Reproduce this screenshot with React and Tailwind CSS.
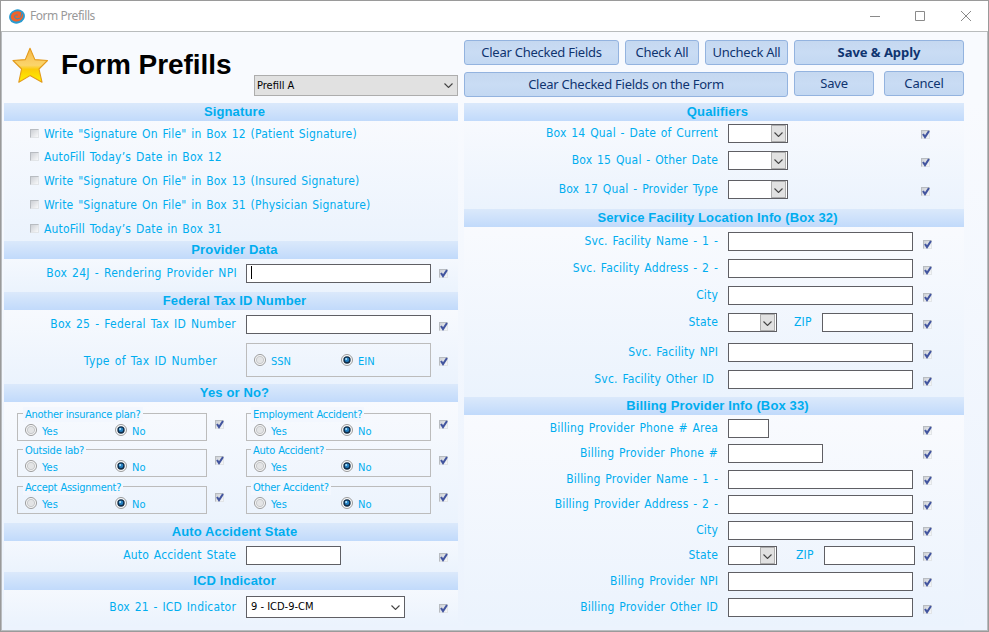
import { useState } from 'react'
import clsx from 'clsx'

const tahoma = "font-['DejaVu_Sans_Condensed','DejaVu_Sans',sans-serif] [font-stretch:condensed]"
const segoe = "font-['Noto_Sans','Open_Sans',sans-serif] [word-spacing:0]"

function Check({ className, on = true }) {
  const [checked, setChecked] = useState(on)
  return (
    <button
      onClick={() => setChecked(!checked)}
      className={clsx(
        'block size-[9px] shrink-0 border border-[#b8bcc1] border-r-[#e2e5e8] border-b-[#e2e5e8] bg-linear-to-br from-[#cdd0d5] to-[#f8f9fa]',
        className
      )}
    >
      {checked && (
        <svg viewBox="0 0 9 9" className="-mt-px -ml-px block size-[9px] overflow-visible" fill="none">
          <path d="M2 4 4 7 8 1" stroke="#42559f" strokeWidth="2.1" />
        </svg>
      )}
    </button>
  )
}

function Radio({ on, label, className }) {
  return (
    <span className={clsx('flex h-3 items-center tracking-normal', className)}>
      <svg viewBox="0 0 12 12" className="size-3 shrink-0">
        <circle cx="6" cy="6" r="5.5" fill="#fbfbfb" stroke="#8e8f8f" strokeWidth="0.9" />
        {on ? (
          <>
            <circle cx="6" cy="6" r="3.7" fill="#0f2c48" />
            <circle cx="6" cy="5.8" r="2.3" fill="#2480c2" />
            <circle cx="5.2" cy="4.9" r="1" fill="#b5e4fa" />
          </>
        ) : (
          <circle cx="6" cy="6" r="3.7" fill="#e3e4e5" stroke="#bcbfc1" strokeWidth="0.8" />
        )}
      </svg>
      <span className="mt-[3px] ml-[5px] text-[11px] leading-3">{label}</span>
    </span>
  )
}

function Chevron({ className }) {
  return (
    <svg viewBox="0 0 9 5" className={clsx('h-[5px] w-[9px]', className)} fill="none">
      <path d="M0.5 0.5 4.5 4.5 8.5 0.5" stroke="#444" strokeWidth="1.1" />
    </svg>
  )
}

function Field({ className }) {
  return <input className={clsx('block h-[19px] shrink-0 border border-[#5f5f64] bg-white px-1 text-[11px] text-black outline-none', className)} />
}

function SmallSelect({ className }) {
  return (
    <div className={clsx('flex h-[19px] shrink-0 justify-end border border-[#5f5f64] bg-white pr-px', className)}>
      <div className="flex w-[15px] items-center justify-center border border-[#adadad] bg-[#e1e1e1] pt-px">
        <Chevron />
      </div>
    </div>
  )
}

function Section({ title, className, children }) {
  return (
    <section className={clsx('flex flex-col bg-linear-to-b from-[#fafbfe] to-[#ebf3fd]', className)}>
      <h2 className="h-[18px] shrink-0 bg-linear-to-b from-[#dbe9fb] to-[#c1dafb] pl-[7px] text-center font-['Liberation_Sans',Arial,sans-serif] text-[13px] leading-[17px] font-bold tracking-[0.14px] [word-spacing:0]">
        {title}
      </h2>
      {children}
    </section>
  )
}

function LeftRow({ label, className, labelClass = 'w-[232px]', checkClass, children }) {
  return (
    <div className={clsx('flex h-[19px] shrink-0', className)}>
      <label className={clsx('shrink-0 text-right leading-[19px] whitespace-nowrap', labelClass)}>{label}</label>
      <div className="ml-auto flex w-[212px] shrink-0">
        {children}
        <Check className={clsx('mr-[10px] ml-auto', checkClass)} />
      </div>
    </div>
  )
}

function RightRow({ label, className, labelClass = 'w-[254px]', bodyClass = 'w-[204px]', checkClass, children }) {
  return (
    <div className={clsx('flex h-[19px] shrink-0', className)}>
      <div className="w-[264px] shrink-0">
        <label className={clsx('block text-right leading-[19px]', labelClass)}>{label}</label>
      </div>
      <div className={clsx('flex shrink-0', bodyClass)}>
        {children}
        <Check className={clsx('ml-auto', checkClass)} />
      </div>
    </div>
  )
}

function YesNo({ title, wide }) {
  return (
    <fieldset className={clsx('relative h-7 shrink-0 border border-[#bcbcbc]', wide ? 'w-[190px]' : 'w-[185px]')}>
      <span
        className={clsx(
          'absolute -top-[7px] bg-[#f3f7fe] px-[2px] text-[11px] leading-[15px] tracking-[-0.25px] whitespace-nowrap [word-spacing:0.3px]',
          wide ? 'left-[5px]' : 'left-[4px]'
        )}
      >
        {title}
      </span>
      <div className="flex pt-[10px] pl-[7px]">
        <Radio label="Yes" className={wide ? 'w-[90px]' : 'w-[87px]'} />
        <Radio label="No" on />
      </div>
    </fieldset>
  )
}

function Btn({ className, children }) {
  return (
    <button
      className={clsx(
        'flex h-[25px] shrink-0 items-center justify-center rounded-[3px] border border-[#93b3df] bg-linear-to-b from-[#c5d8f0] via-[#c9dcf4] to-[#c3d8f2] text-[13px] whitespace-nowrap text-[#0f3470]',
        segoe,
        className
      )}
    >
      {children}
    </button>
  )
}

const signatures = [
  { text: 'Write "Signature On File" in Box 12 (Patient Signature)', cls: 'mt-[3px]' },
  { text: 'AutoFill Today’s Date in Box 12', cls: 'mt-[4px]' },
  { text: 'Write "Signature On File" in Box 13 (Insured Signature)', cls: 'mt-[5px]' },
  { text: 'Write "Signature On File" in Box 31 (Physician Signature)', cls: 'mt-[5px]' },
  { text: 'AutoFill Today’s Date in Box 31', cls: 'mt-[5px]' },
]

const questions = [
  { left: 'Another insurance plan?', right: 'Employment Accident?', cls: 'mt-[11px]' },
  { left: 'Outside lab?', right: 'Auto Accident?', cls: 'mt-[8px]' },
  { left: 'Accept Assignment?', right: 'Other Accident?', cls: 'mt-[9px]' },
]

export default function App() {
  return (
    <div
      className={clsx(
        'flex h-[632px] w-[989px] flex-col overflow-hidden border border-[#9a9a9a] bg-[#f8fafe] text-[12px] tracking-[0.17px] text-[#00adef] [word-spacing:1.2px]',
        tahoma
      )}
    >
      {/* title bar */}
      <header className="flex h-[31px] shrink-0 items-center border-b border-[#b9bcbd] bg-white pl-2">
        <svg viewBox="0 0 16 15" className="h-[15px] w-4">
          <ellipse cx="8" cy="7.500" rx="8" ry="7" transform="rotate(-20 8 7.5)" fill="#2a9bd0" />
          <path d="M2 9.600C1 5 5 1.800 9 2.200c4 .4 5.800 3.500 4.600 6.600-1 2.700-4.400 4-7.400 3.600-1.600-.2-3.600-1.200-4.200-2.800z" fill="#f2622a" />
          <path d="M12.500 4c.6 3-1 5.600-3.900 5.800-2.300.1-3.600-1.500-2.800-3 .6-1.100 2.200-1.200 3-.5" fill="none" stroke="#3a8fba" strokeWidth="1" />
        </svg>
        <span className={clsx('ml-[5px] text-[12px] tracking-[-0.45px] text-[#999]', segoe)}>Form Prefills</span>
        <div className="ml-auto flex items-center gap-[35px] pr-[17px] pb-px">
          <svg viewBox="0 0 10 10" className="size-[10px]"><path d="M0 5.500h10" stroke="#8a8a8a" /></svg>
          <svg viewBox="0 0 10 10" className="mr-px size-[10px]"><path d="M.5.5h9v9h-9z" fill="none" stroke="#8a8a8a" /></svg>
          <svg viewBox="0 0 10 10" className="size-[10px] overflow-visible"><path d="M0 0l10 10M10 0L0 10" stroke="#8a8a8a" /></svg>
        </div>
      </header>

      <div className="flex grow flex-col border-x border-b border-[#b9bcbf]">
        {/* toolbar */}
        <div className="flex h-[71px] shrink-0 pl-[2px]">
          <div className="flex w-[454px] shrink-0">
            <svg viewBox="0 0 38 38" className="mt-[14px] ml-[7px] size-[38px]">
              <defs>
                <linearGradient id="star" x1="0" y1="0" x2="0" y2="1">
                  <stop offset="0" stopColor="#f6b848" />
                  <stop offset="0.5" stopColor="#fbd56c" />
                  <stop offset="0.62" stopColor="#fccb08" />
                  <stop offset="1" stopColor="#fff200" />
                </linearGradient>
              </defs>
              <path
                d="M19 2.300 23.900 13.600 36.500 14.500 28 23 31 36.200 19 29.600 7.800 36.200 10.600 23 2 14.500 14.300 13.600Z"
                fill="url(#star)"
                stroke="#e39a1c"
                strokeWidth="1.100"
                strokeLinejoin="round"
              />
            </svg>
            <h1 className="mt-[16px] ml-[12px] w-[193px] shrink-0 font-['Liberation_Sans',Arial,sans-serif] text-[28px] leading-[34px] font-bold tracking-[-0.05px] text-black [word-spacing:0]">
              Form Prefills
            </h1>
            <div className="mt-[43px] flex h-[21px] w-[204px] items-center justify-between border border-[#adadad] bg-[#e1e1e1] pr-1 pl-[2px] text-[11px] tracking-normal text-black [word-spacing:0]">
              <span className="pt-[2px]">Prefill A</span>
              <Chevron />
            </div>
          </div>
          <div className="ml-[6px] flex w-[324px] shrink-0 flex-col gap-[7px] pt-2">
            <div className="flex gap-[6px] tracking-[-0.25px]">
              <Btn className="w-[155px]">Clear Checked Fields</Btn>
              <Btn className="w-[74px]">Check All</Btn>
              <Btn className="w-[83px]">Uncheck All</Btn>
            </div>
            <Btn className="w-[324px] tracking-[-0.25px]">Clear Checked Fields on the Form</Btn>
          </div>
          <div className="ml-[6px] flex w-[170px] shrink-0 flex-col gap-[6px] pt-2">
            <Btn className="w-[170px] font-bold tracking-[-0.05px]">Save &amp; Apply</Btn>
            <div className="flex justify-between tracking-[-0.2px]">
              <Btn className="w-[80px]">Save</Btn>
              <Btn className="w-[80px]">Cancel</Btn>
            </div>
          </div>
        </div>

        <main className="flex grow gap-[6px] bg-linear-to-b from-[#f8fafe] to-[#ecf3fd] pl-[2px]">
          <div className="flex w-[454px] shrink-0 flex-col">
            <Section title="Signature" className="h-[138px]">
              {signatures.map((s) => (
                <div key={s.text} className={clsx('flex h-[19px] shrink-0 items-center pl-[26px]', s.cls)}>
                  <Check on={false} />
                  <span className="ml-[5px] pt-px leading-[19px] tracking-[0.19px] whitespace-nowrap">{s.text}</span>
                </div>
              ))}
            </Section>

            <Section title="Provider Data" className="h-[51px]">
              <LeftRow label="Box 24J - Rendering Provider NPI" labelClass="w-[233px] tracking-[0.3px]" className="mt-[5px]" checkClass="mt-[5px]">
                <div className="flex h-[19px] w-[185px] border border-[#5f5f64] bg-white pt-px pl-[4px]">
                  <span className="h-[13px] w-px bg-black" />
                </div>
              </LeftRow>
            </Section>

            <Section title="Federal Tax ID Number" className="h-[92px]">
              <LeftRow label="Box 25 - Federal Tax ID Number" labelClass="w-[232px] tracking-[0.27px]" className="mt-[5px]" checkClass="mt-[7px]">
                <Field className="w-[185px]" />
              </LeftRow>
              <div className="mt-[9px] flex h-[34px] shrink-0">
                <span className="w-[213px] text-right leading-[36px] tracking-[0.34px]">Type of Tax ID Number</span>
                <div className="ml-auto flex w-[212px] shrink-0">
                  <div className="flex h-[34px] w-[185px] items-center border border-[#bcbcbc] pl-[7px]">
                    <Radio label="SSN" className="w-[87px]" />
                    <Radio label="EIN" on />
                  </div>
                  <Check className="mt-[14px] mr-[10px] ml-auto" />
                </div>
              </div>
            </Section>

            <Section title="Yes or No?" className="h-[139px]">
              {questions.map((q) => (
                <div key={q.left} className={clsx('flex h-7 shrink-0 pl-[13px]', q.cls)}>
                  <YesNo title={q.left} wide />
                  <Check className="mt-[7px] mr-[22px] ml-[8px]" />
                  <YesNo title={q.right} />
                  <Check className="mt-[7px] ml-[8px]" />
                </div>
              ))}
            </Section>

            <Section title="Auto Accident State" className="h-[49px]">
              <LeftRow label="Auto Accident State" className="mt-[5px]" checkClass="mt-[7px]">
                <Field className="w-[95px]" />
              </LeftRow>
            </Section>

            <Section title="ICD Indicator" className="h-[54px]">
              <LeftRow label="Box 21 - ICD Indicator" labelClass="w-[232px] pt-[2px]" className="mt-[6px]" checkClass="mt-[8px]">
                <div className="flex h-[22px] w-[159px] items-center justify-between border border-[#5f5f64] bg-white pr-1 pl-1 text-[11px] tracking-normal text-black [word-spacing:0]">
                  <span className="pt-px">9 - ICD-9-CM</span>
                  <Chevron />
                </div>
              </LeftRow>
            </Section>
          </div>

          <div className="flex w-[500px] shrink-0 flex-col">
            <Section title="Qualifiers" className="h-[106px]">
              <RightRow label="Box 14 Qual - Date of Current" bodyClass="w-[202px]" className="mt-[3px]" checkClass="mt-[6px]">
                <SmallSelect className="w-[60px]" />
              </RightRow>
              <RightRow label="Box 15 Qual - Other Date" bodyClass="w-[202px]" className="mt-[8px]" checkClass="mt-[7px]">
                <SmallSelect className="w-[60px]" />
              </RightRow>
              <RightRow label="Box 17 Qual - Provider Type" bodyClass="w-[202px]" className="mt-[10px]" checkClass="mt-[7px]">
                <SmallSelect className="w-[60px]" />
              </RightRow>
            </Section>

            <Section title="Service Facility Location Info (Box 32)" className="h-[188px]">
              <RightRow label="Svc. Facility Name - 1 -" className="mt-[5px]" checkClass="mt-[8px]">
                <Field className="w-[185px]" />
              </RightRow>
              <RightRow label="Svc. Facility Address - 2 -" className="mt-[8px]" checkClass="mt-[7px]">
                <Field className="w-[185px]" />
              </RightRow>
              <RightRow label="City" className="mt-[8px]" checkClass="mt-[7px]">
                <Field className="w-[185px]" />
              </RightRow>
              <RightRow label="State" className="mt-[8px]" checkClass="mt-[7px]">
                <SmallSelect className="w-[49px]" />
                <span className="ml-[17px] w-[28px] leading-[19px]">ZIP</span>
                <Field className="w-[91px]" />
              </RightRow>
              <RightRow label="Svc. Facility NPI" className="mt-[11px]" checkClass="mt-[7px]">
                <Field className="w-[185px]" />
              </RightRow>
              <RightRow label="Svc. Facility Other ID" labelClass="w-[250px]" className="mt-[8px]" checkClass="mt-[7px]">
                <Field className="w-[185px]" />
              </RightRow>
            </Section>

            <Section title="Billing Provider Info (Box 33)" className="h-[229px]">
              <RightRow label="Billing Provider Phone # Area" className="mt-[4px]" checkClass="mt-[7px]">
                <Field className="w-[41px]" />
              </RightRow>
              <RightRow label="Billing Provider Phone #" className="mt-[6px]" checkClass="mt-[6px]">
                <Field className="w-[95px]" />
              </RightRow>
              <RightRow label="Billing Provider Name - 1 -" className="mt-[7px]" checkClass="mt-[6px]">
                <Field className="w-[185px]" />
              </RightRow>
              <RightRow label="Billing Provider Address - 2 -" className="mt-[6px]" checkClass="mt-[6px]">
                <Field className="w-[185px]" />
              </RightRow>
              <RightRow label="City" className="mt-[7px]" checkClass="mt-[6px]">
                <Field className="w-[185px]" />
              </RightRow>
              <RightRow label="State" className="mt-[6px]" bodyClass="w-[204px]" checkClass="mt-[6px]">
                <SmallSelect className="w-[49px]" />
                <span className="ml-[19px] w-[28px] leading-[19px]">ZIP</span>
                <Field className="w-[91px]" />
              </RightRow>
              <RightRow label="Billing Provider NPI" className="mt-[7px]" checkClass="mt-[6px]">
                <Field className="w-[185px]" />
              </RightRow>
              <RightRow label="Billing Provider Other ID" className="mt-[7px]" checkClass="mt-[7px]">
                <Field className="w-[185px]" />
              </RightRow>
            </Section>
          </div>
        </main>
      </div>
    </div>
  )
}
